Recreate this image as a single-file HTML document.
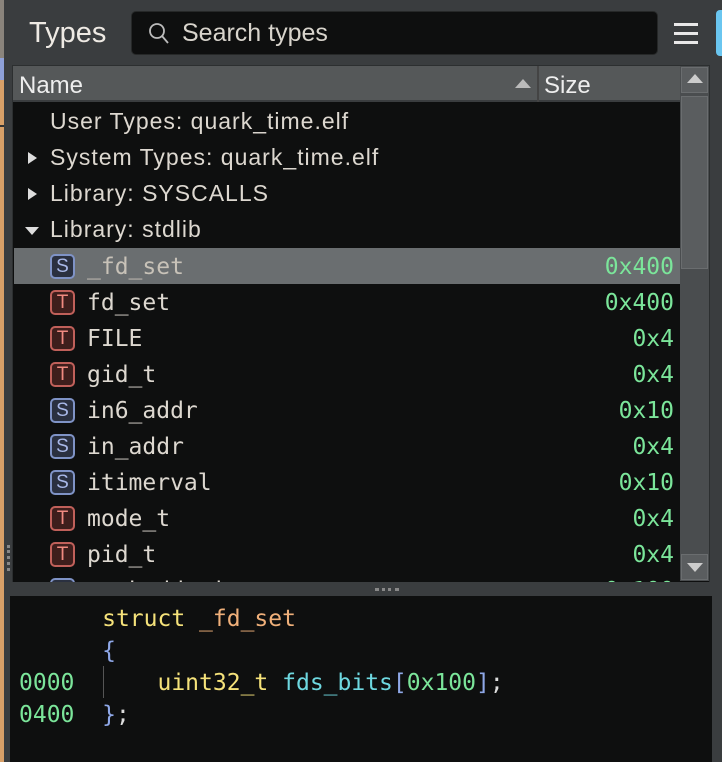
<!DOCTYPE html>
<html><head><style>
*{margin:0;padding:0;box-sizing:border-box}
body{width:722px;height:762px;background:#3a3d3f;position:relative;overflow:hidden;font-family:"Liberation Sans",sans-serif}
.a{position:absolute}
.mono{font-family:"DejaVu Sans Mono","Liberation Mono",monospace}
.row{position:absolute;left:14px;width:666px;height:36px;color:#ddd8d0;font-size:23px;letter-spacing:1px}
.row span.t{position:absolute;top:4px}
.ic{position:absolute;left:36px;top:6px;width:25px;height:25px;border-radius:5px;font-size:19px;line-height:21px;text-align:center;font-family:"Liberation Sans",sans-serif;letter-spacing:0}
.S{border:2px solid #7f93c6;background:#2a3040;color:#a8b8e8}
.T{border:2px solid #c0605a;background:#3e1e1c;color:#f08a80}
.nm{position:absolute;left:73px;top:6px;font-size:23px;color:#ddd8d0;letter-spacing:0}
.sz{position:absolute;right:6px;top:6px;font-size:23px;color:#7be59a;letter-spacing:0}
.tri{position:absolute;left:14px;top:12px;width:0;height:0;border-top:6px solid transparent;border-bottom:6px solid transparent;border-left:9px solid #ddd}
</style></head><body>
<div class="a" style="left:0;top:0;width:4px;height:58px;background:#8a847c"></div>
<div class="a" style="left:0;top:58px;width:4px;height:22px;background:#8ea0d8"></div>
<div class="a" style="left:0;top:80px;width:4px;height:682px;background:#d8a068"></div>
<div class="a" style="left:0;top:125px;width:4px;height:2px;background:#333"></div>
<div class="a" style="left:716px;top:10px;width:6px;height:46px;background:#6ac6f0;border-radius:4px 0 0 4px"></div>
<div class="a" style="left:29px;top:17px;font-size:29px;color:#eeeae4">Types</div>
<div class="a" style="left:131px;top:11px;width:527px;height:44px;background:#0e0f0f;border-radius:5px;border:1px solid #262828"></div>
<svg class="a" style="left:148px;top:22px" width="22" height="24"><circle cx="9" cy="9" r="7" fill="none" stroke="#bbb" stroke-width="1.8"/><line x1="14" y1="14" x2="20" y2="21" stroke="#bbb" stroke-width="1.8"/></svg>
<div class="a" style="left:182px;top:19px;font-size:25px;color:#d8d4cc">Search types</div>
<div class="a" style="left:674px;top:23px;width:24px;height:2.5px;background:#e8e8e8"></div>
<div class="a" style="left:674px;top:32px;width:24px;height:2.5px;background:#e8e8e8"></div>
<div class="a" style="left:674px;top:41px;width:24px;height:2.5px;background:#e8e8e8"></div>

<div class="a" style="left:12px;top:65px;width:698px;height:520px;background:#0e0f0f;border:1px solid #2c2f30"></div>
<div class="a" style="left:13px;top:66px;width:667px;height:36px;background:#555859;border-bottom:2px solid #3a3d3f"></div>
<div class="a" style="left:537px;top:66px;width:2px;height:36px;background:#444"></div>
<div class="a" style="left:19px;top:72px;font-size:24px;color:#eee">Name</div>
<div class="a" style="left:515px;top:79px;width:0;height:0;border-left:8px solid transparent;border-right:8px solid transparent;border-bottom:9px solid #bbb"></div>
<div class="a" style="left:544px;top:72px;font-size:24px;color:#eee">Size</div>
<div class="a" style="left:680px;top:66px;width:29px;height:515px;background:#4a4d4f"></div>
<div class="a" style="left:681px;top:67px;width:27px;height:26px;background:#5a5d5f;border:1px solid #6a6d6f"></div>
<div class="a" style="left:687px;top:74px;border-left:8px solid transparent;border-right:8px solid transparent;border-bottom:9px solid #ccc"></div>
<div class="a" style="left:681px;top:96px;width:27px;height:173px;background:#5a5d5f;border:1px solid #6a6d6f"></div>
<div class="a" style="left:681px;top:554px;width:27px;height:26px;background:#5a5d5f;border:1px solid #6a6d6f"></div>
<div class="a" style="left:687px;top:563px;border-left:8px solid transparent;border-right:8px solid transparent;border-top:9px solid #ccc"></div>

<div style="position:absolute;left:0;top:0;width:680px;height:582px;overflow:hidden">
<div class="row" style="top:104px"><span class="t" style="left:36px">User Types: quark_time.elf</span></div>
<div class="row" style="top:140px"><div class="tri"></div><span class="t" style="left:36px">System Types: quark_time.elf</span></div>
<div class="row" style="top:176px"><div class="tri"></div><span class="t" style="left:36px">Library: SYSCALLS</span></div>
<div class="row" style="top:212px"><div style="position:absolute;left:11px;top:15px;border-left:7px solid transparent;border-right:7px solid transparent;border-top:8px solid #ddd"></div><span class="t" style="left:36px">Library: stdlib</span></div>
<div class="row mono" style="top:248px;background:#6a6e70"><div class="ic S">S</div><span class="nm" style="color:#c8c2b8">_fd_set</span><span class="sz">0x400</span></div>
<div class="row mono" style="top:284px"><div class="ic T">T</div><span class="nm">fd_set</span><span class="sz">0x400</span></div>
<div class="row mono" style="top:320px"><div class="ic T">T</div><span class="nm">FILE</span><span class="sz">0x4</span></div>
<div class="row mono" style="top:356px"><div class="ic T">T</div><span class="nm">gid_t</span><span class="sz">0x4</span></div>
<div class="row mono" style="top:392px"><div class="ic S">S</div><span class="nm">in6_addr</span><span class="sz">0x10</span></div>
<div class="row mono" style="top:428px"><div class="ic S">S</div><span class="nm">in_addr</span><span class="sz">0x4</span></div>
<div class="row mono" style="top:464px"><div class="ic S">S</div><span class="nm">itimerval</span><span class="sz">0x10</span></div>
<div class="row mono" style="top:500px"><div class="ic T">T</div><span class="nm">mode_t</span><span class="sz">0x4</span></div>
<div class="row mono" style="top:536px"><div class="ic T">T</div><span class="nm">pid_t</span><span class="sz">0x4</span></div>
<div class="row mono" style="top:572px"><div class="ic S">S</div><span class="nm">sockaddr_in</span><span class="sz">0x100</span></div>
</div>
<div class="a" style="left:10px;top:582px;width:702px;height:14px;background:#3a3d3f"></div>
<div class="a" style="left:375px;top:588px;width:24px;height:3px;border-top:3px dotted #888"></div>
<div class="a" style="left:7px;top:545px;width:3px;height:26px;border-left:3px dotted #888"></div>
<div class="a" style="left:10px;top:596px;width:702px;height:166px;background:#0e0f0f"></div>
<div class="a mono" style="left:19px;top:603px;font-size:23px;line-height:32px;white-space:pre;color:#ddd">      <span style="color:#f5e27a">struct</span> <span style="color:#f0b07a">_fd_set</span>
      <span style="color:#8fa8e8">{</span>
<span style="color:#7be59a">0000</span>      <span style="color:#f5e27a">uint32_t</span> <span style="color:#6ed8e0">fds_bits</span><span style="color:#8fa8e8">[</span><span style="color:#7be59a">0x100</span><span style="color:#8fa8e8">]</span>;
<span style="color:#7be59a">0400</span>  <span style="color:#8fa8e8">}</span>;</div>
<div class="a" style="left:103px;top:666px;width:1px;height:32px;background:#555"></div>
</body></html>
